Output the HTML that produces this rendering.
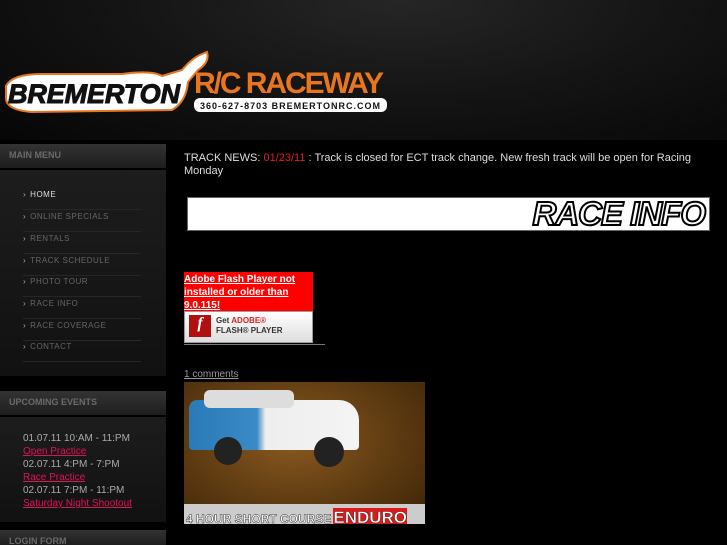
<!DOCTYPE html>
<html><head><style>
*{margin:0;padding:0;box-sizing:border-box}
html,body{width:727px;height:545px;overflow:hidden}
body{background:#000;font-family:"Liberation Sans",sans-serif;position:relative}
.hdr{position:absolute;left:0;top:0;width:727px;height:140px;background:radial-gradient(ellipse at 55% 0%,#262626 0%,#141414 50%,#060606 100%)}
.ph{position:absolute;left:0;width:166px;height:24px;background:linear-gradient(#333,#1e1e1e);color:#6a6a6a;font-size:9px;font-weight:bold;padding:6px 9px;}
.pb{position:absolute;left:0;width:166px;background:linear-gradient(#1d1d1d,#111)}
.mi{position:absolute;left:23px;width:118px;font-size:8px;letter-spacing:.5px;color:#666;border-bottom:1px solid #262626;height:22px;line-height:14px}
.mi.h{color:#ddd}
.mi:before{content:"›";margin-right:4px;color:#aaa}
.ev{position:absolute;left:23px;top:432px;font-size:10px;line-height:13px;color:#aaa}
.ev a{color:#e0105a;text-decoration:underline}
</style></head><body>
<div class="hdr"></div>
<svg style="position:absolute;left:2px;top:48px" width="390" height="70">
<path d="M4 38 Q10 26 40 26 L120 26 Q150 22 160 28 L180 22 Q190 10 200 6 L205 4 Q208 14 196 22 L186 34 Q184 54 170 62 L30 64 Q4 62 4 50Z" fill="#fff" stroke="#e8761f" stroke-width="2"/>
<text x="6" y="55" font-family="Liberation Sans" font-weight="bold" font-style="italic" font-size="27" fill="#111" stroke="#111" stroke-width="1" textLength="172">BREMERTON</text>
<text x="192" y="45" font-family="Liberation Sans" font-weight="bold" font-size="30" fill="#e8761f" textLength="190">R/C RACEWAY</text>
<rect x="192" y="50" width="193" height="14" rx="6" fill="#fff"/>
<text x="198" y="61" font-family="Liberation Sans" font-weight="bold" font-size="9" fill="#111" textLength="180">360-627-8703  BREMERTONRC.COM</text>
</svg>
<div class="ph" style="top:144px">MAIN MENU</div>
<div class="pb" style="top:170px;height:206px"></div>
<div class="mi h" style="top:188px">HOME</div>
<div class="mi" style="top:210px">ONLINE SPECIALS</div>
<div class="mi" style="top:232px">RENTALS</div>
<div class="mi" style="top:254px">TRACK SCHEDULE</div>
<div class="mi" style="top:275px">PHOTO TOUR</div>
<div class="mi" style="top:297px">RACE INFO</div>
<div class="mi" style="top:319px">RACE COVERAGE</div>
<div class="mi" style="top:340px">CONTACT</div>
<div class="ph" style="top:391px">UPCOMING EVENTS</div>
<div class="pb" style="top:417px;height:105px"></div>
<div class="ev">01.07.11 10:AM - 11:PM<br><a>Open Practice</a><br>02.07.11 4:PM - 7:PM<br><a>Race Practice</a><br>02.07.11 7:PM - 11:PM<br><a>Saturday Night Shootout</a></div>
<div class="ph" style="top:530px;height:15px">LOGIN FORM</div>
<div style="position:absolute;left:184px;top:152px;width:520px;font-size:11px;line-height:13px;color:#ddd">TRACK NEWS: <span style="color:#e02020">01/23/11</span> : Track is closed for ECT track change. New fresh track will be open for Racing Monday</div>
<div style="position:absolute;left:187px;top:197px;width:523px;height:34px;background:#fff;border:1px solid #666;overflow:hidden">
<span style="position:absolute;right:4px;top:-3px;font:italic 900 33px 'Liberation Sans',sans-serif;color:#fff;-webkit-text-stroke:2px #000;letter-spacing:-1px">RACE INFO</span></div>
<div style="position:absolute;left:184px;top:272px;width:129px;height:39px;background:#f00;color:#fff;font-size:10px;font-weight:bold;line-height:13px;text-decoration:underline;padding-top:1px">Adobe Flash Player not installed or older than 9.0.115!</div>
<div style="position:absolute;left:184px;top:311px;width:129px;height:32px;background:linear-gradient(#fff,#ddd);border:1px solid #999">
<div style="position:absolute;left:4px;top:3px;width:22px;height:22px;background:#b01010;color:#fff;font:italic bold 16px 'Liberation Serif';text-align:center">f</div>
<div style="position:absolute;left:31px;top:4px;font:bold 8px 'Liberation Sans';color:#333;line-height:10px">Get <span style="color:#e02020">ADOBE®</span><br>FLASH® PLAYER</div></div>
<div style="position:absolute;left:184px;top:344px;width:141px;height:1px;background:#777"></div>
<div style="position:absolute;left:184px;top:369px;font-size:10px;color:#999;text-decoration:underline">1 comments</div>
<div style="position:absolute;left:184px;top:382px;width:241px;height:142px;overflow:hidden;background:radial-gradient(ellipse at 45% 40%,#8a5a20,#5a3810 60%,#3a2408)">
<div style="position:absolute;left:5px;top:18px;width:170px;height:50px;background:linear-gradient(90deg,#2a7ab8 0,#3a8ac8 40%,#eee 45%,#f4f4f4);border-radius:8px 20px 4px 4px"></div>
<div style="position:absolute;left:20px;top:8px;width:90px;height:18px;background:#ddd;border-radius:6px"></div>
<div style="position:absolute;left:30px;top:55px;width:28px;height:28px;border-radius:50%;background:#222"></div>
<div style="position:absolute;left:130px;top:55px;width:30px;height:30px;border-radius:50%;background:#222"></div>
<div style="position:absolute;left:0;top:122px;width:241px;height:20px;background:#ccc;font:bold 12px 'Liberation Sans';color:#fff;-webkit-text-stroke:.5px #333;padding:4px 2px;white-space:nowrap;overflow:hidden">4 HOUR SHORT COURSE<span style="color:#fff;background:#e01818;font-size:17px;margin-left:2px">ENDURO</span></div>
</div>
</body></html>
